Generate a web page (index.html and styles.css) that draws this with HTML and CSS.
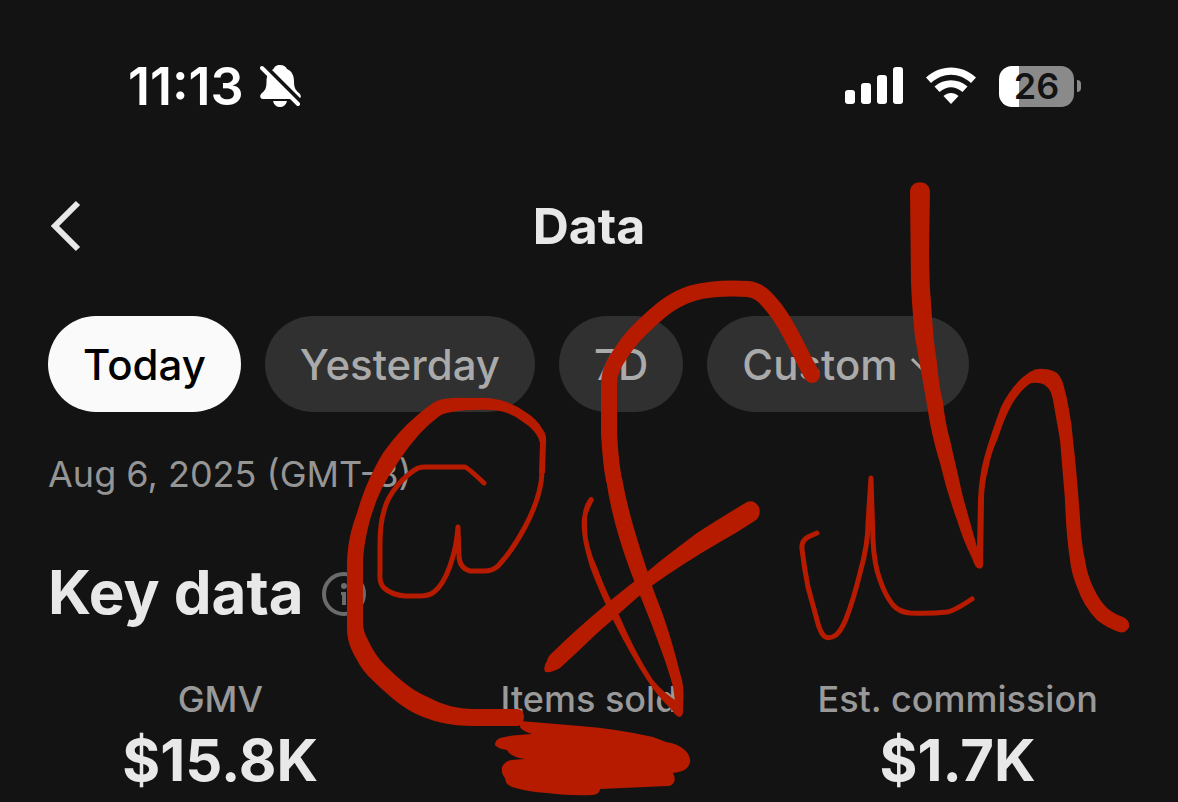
FILE: index.html
```html
<!DOCTYPE html>
<html lang="en">

<head>
    <meta charset="UTF-8">
    <meta name="viewport" content="width=device-width, initial-scale=1.0">
    <title>Data</title>
    <link rel="stylesheet" href="styles.css">
</head>

<body>
    <div class="screen">
        <!-- Status bar -->
        <div class="status-bar">
            <div class="status-left">
                <span class="time">11:13</span>
                <svg class="bell" width="42" height="44" viewBox="0 0 42 44" aria-hidden="true">
                    <path d="M20 1c-4 0-5.500 2-6.500 4C9 7 6.500 12 6.500 17c0 7-1 9-4.500 12-3 2.500-2 6 1 6h35c3 0 4-3.500 1-6-3.500-3-5-5-5-12 0-5-2-10-7-12C26 3 24 1 20 1zM13 37h14c-1 4-3.500 6-7 6s-6-2-7-6z" fill="#fff" />
                    <path d="M3.500 2.500L41 40" stroke="#131313" stroke-width="7" />
                    <path d="M2 4L38 40" stroke="#fff" stroke-width="4" stroke-linecap="round" />
                </svg>
            </div>
            <div class="status-right">
                <svg width="58" height="38" viewBox="0 0 58 38" fill="#fff" aria-hidden="true">
                    <rect x="0" y="23" width="10" height="14" rx="3" />
                    <rect x="16" y="16" width="10" height="21" rx="3" />
                    <rect x="32" y="8" width="10" height="29" rx="3" />
                    <rect x="48" y="0" width="10" height="37" rx="3" />
                </svg>
                <svg width="52" height="38" viewBox="0 0 52 38" aria-hidden="true">
                    <path d="M1 10.500C15-3 37-3 51 10.500L46 16C34 5 18 5 6 16z" fill="#fff" />
                    <path d="M9.500 19.500C19 11 33 11 42.500 19.500L37.500 25C30 18.500 22 18.500 14.500 25z" fill="#fff" />
                    <path d="M18.500 29C23 25 29 25 33.500 29L26 37z" fill="#fff" />
                </svg>
                <div class="battery">
                    <span class="battery-level">26</span>
                    <span class="battery-tip"></span>
                </div>
            </div>
        </div>

        <!-- Header -->
        <div class="header">
            <button class="back" type="button" aria-label="Back">
                <svg width="34" height="54" viewBox="0 0 34 54" aria-hidden="true">
                    <path d="M30 4L7 27l23 23" fill="none" stroke="#e8e8e8" stroke-width="6" />
                </svg>
            </button>
            <h1>Data</h1>
        </div>

        <!-- Date filters -->
        <div class="filters">
            <button class="chip active" type="button">Today</button>
            <button class="chip" type="button">Yesterday</button>
            <button class="chip" type="button">7D</button>
            <label class="chip">
                <select aria-label="Custom range">
                    <option>Custom</option>
                </select>
                <svg width="24" height="16" viewBox="0 0 24 16" aria-hidden="true">
                    <path d="M2 3l10 10L22 3" fill="none" stroke="#aaa" stroke-width="3" />
                </svg>
            </label>
        </div>

        <p class="date">Aug 6, 2025 (GMT-8)</p>

        <div class="section-title">
            <h2>Key data</h2>
            <svg width="44" height="48" viewBox="0 0 44 48" aria-hidden="true">
                <circle cx="22" cy="26" r="20" fill="none" stroke="#6b6b6b" stroke-width="4" />
                <circle cx="22" cy="18" r="3" fill="#6b6b6b" />
                <path d="M19 24h5v13h-4V27h-1z" fill="#6b6b6b" />
            </svg>
        </div>

        <!-- Key numbers -->
        <div class="metrics">
            <div class="metric">
                <div class="metric-label">GMV</div>
                <div class="metric-value">$15.8K</div>
            </div>
            <div class="metric">
                <div class="metric-label">Items sold</div>
            </div>
            <div class="metric">
                <div class="metric-label">Est. commission</div>
                <div class="metric-value">$1.7K</div>
            </div>
        </div>

        <!-- Handwriting over the page -->
        <svg class="ink" viewBox="0 0 1178 802" aria-hidden="true">
            <!-- at sign -->
            <path class="fill" d="M518 726H473C455 726 438 723 423 717C408 711 396 702 383 690C371 679 363 672 357 660C350 648 347 640 347 627V567C347 545 351 529 357 513C363 492 371 473 383 453C398 432 412 418 433 403Q438 400 443 399Q458 397 473 398Q488 397 500 400Q515 404 527 413Q537 419 543 430Q547 435 546 443L545 473H539L540 443Q539 438 536 434Q531 427 523 422Q512 413 500 411Q487 409 473 410Q459 410 447 413Q441 414 437 418C420 431 407 448 393 470C382 485 375 503 370 520C366 535 363 550 363 567V620C363 630 365 634 368 640C374 653 381 662 390 670C402 682 415 692 430 698C443 705 458 709 473 709H517Q523 709 524 716Q524 725 518 726Z" />
            <path class="thin" d="M542 472C541 508 513 550 498 566Q493 571 484 571H470Q459 568 459 555L458 527C456 555 446 583 434 592Q429 596 420 596H405Q392 595 384 588Q379 583 380 572V545C380 528 381 520 384 511C388 493 405 475 418 468Q421 467 426 467H465Q468 468 484 483" />
            <!-- f -->
            <path class="thick" d="M812 375C804 361 799 349 790 333Q780 314 770 303Q760 290 748 289C729 288 712 288 693 293C674 299 663 308 650 320Q632 336 623 350C614 363 609 371 609 385V433C610 452 611 465 614 480" />
            <path class="fill" d="M606 478C611 515 622 550 635 583C645 608 652 624 660 647Q669 671 673 687L675 700Q663 692 653 680C640 660 630 640 620 617Q607 595 597 567Q588 548 587 530V517Q588 511 594 500Q593 495 589 498Q584 505 583 513Q581 520 582 530C583 544 587 556 590 567C597 586 605 603 613 620Q630 654 647 680Q658 697 672 710Q676 717 680 717Q684 715 683 708C684 694 684 685 680 673C676 656 672 643 667 627C660 605 653 591 647 570C636 536 628 511 622 478Z" />
            <path class="fill" d="M747 502Q754 499 759 507Q762 517 753 522C742 529 731 536 720 542C694 557 671 572 650 587C636 598 623 610 610 622C593 636 575 655 560 668Q552 673 545 672Q543 666 547 661Q548 656 552 653C568 637 585 622 603 607C618 594 632 583 647 572C662 559 680 546 697 533Q720 518 747 502Z" />
            <!-- u -->
            <path class="thin" d="M817 533L808 537Q801 541 802 549Q804 567 808 587L817 620Q820 632 824 636Q829 640 836 635Q841 631 846 619Q854 598 860 573Q868 545 868 523L871 478L873 540Q874 564 880 580Q885 595 893 605Q899 612 910 613Q930 614 947 612Q954 611 972 599" />
            <!-- h -->
            <path class="fill" d="M910 192C910 179 930 179 930 192L929 253Q929 285 932 317Q933 340 937 363Q939 387 943 402Q945 422 950 440L963 497L977 547L978 500Q979 477 984 458C989 440 995 423 1001 407C1008 393 1018 379 1030 372Q1036 368 1043 369Q1051 369 1057 373Q1062 378 1064 387Q1067 397 1069 410Q1072 425 1073 440Q1076 466 1077 480L1080 517Q1081 542 1085 560Q1087 574 1093 587Q1099 600 1107 608Q1114 614 1123 617Q1130 620 1129 627Q1126 634 1119 632Q1107 628 1097 620Q1084 607 1077 587Q1071 572 1070 560Q1066 534 1065 500L1060 440L1053 400Q1051 390 1047 387Q1043 383 1038 383Q1031 382 1028 385C1013 397 1005 417 998 438Q991 453 988 470Q984 485 984 500L983 566Q981 571 976 567Q974 564 972 558Q963 540 957 520Q947 493 940 463Q931 434 927 405L915 337Q912 308 911 283Z" />
            <!-- scribble -->
            <path class="fill" d="M520 721L580 726Q618 729 653 737L666 742Q673 743 677 745Q686 749 689 756Q692 763 687 768Q683 772 673 773Q676 779 674 782Q672 786 668 786L600 789Q600 794 593 795Q569 796 547 793Q528 792 512 787Q505 784 505 778Q501 774 502 767Q504 762 511 760L525 759Q510 757 507 750Q498 749 495 745Q495 740 500 738Q510 735 532 734Q522 731 520 727Z" />
        </svg>
    </div>
</body>

</html>
```
FILE: styles.css
```css
* {
    box-sizing: border-box;
}

body {
    margin: 0;
    background-color: #131313;
    color: #e8e8e8;
    font-family: Inter, "Liberation Sans", sans-serif;
}

h1,
h2,
p {
    margin: 0;
}

.screen {
    position: relative;
    padding: 56px 0 16px;
}

/* Status bar */
.status-bar {
    display: flex;
    justify-content: space-between;
    align-items: center;
    height: 60px;
    padding: 0 98px 0 128px;
    color: #fff;
}

.status-left {
    display: flex;
    align-items: center;
    gap: 16px;
}

.status-right {
    display: flex;
    align-items: center;
    gap: 22px;
}

.time {
    font-size: 52px;
    font-weight: 600;
}

.battery {
    position: relative;
    display: flex;
    justify-content: center;
    align-items: center;
    width: 75px;
    height: 41px;
    border-radius: 13px;
    background: linear-gradient(to right, #fff 20px, #8a8a8a 20px);
    margin-right: 6px;
}

.battery-level {
    color: #131313;
    font-size: 36px;
    font-weight: 600;
}

.battery-tip {
    position: absolute;
    right: -7px;
    width: 4px;
    height: 12px;
    border-radius: 0 4px 4px 0;
    background-color: #8a8a8a;
}

/* Header */
.header {
    display: grid;
    grid-template-columns: 1fr auto 1fr;
    align-items: center;
    height: 100px;
    margin-top: 60px;
    padding: 0 48px;
}

.back {
    display: flex;
    justify-self: start;
    padding: 0;
    border: none;
    background: none;
    cursor: pointer;
}

h1 {
    font-size: 50px;
    font-weight: 700;
}

/* Filters */
.filters {
    display: flex;
    gap: 24px;
    margin-top: 40px;
    padding: 0 48px;
}

.chip {
    display: flex;
    align-items: center;
    gap: 12px;
    height: 96px;
    padding: 0 35px;
    border: none;
    border-radius: 48px;
    background-color: #303030;
    color: #aaa;
    font-family: inherit;
    font-size: 42px;
    font-weight: 500;
    cursor: pointer;
}

.chip.active {
    background-color: #fafafa;
    color: #000;
}

.chip select {
    appearance: none;
    padding: 0;
    border: none;
    background: none;
    color: inherit;
    font: inherit;
}

.date {
    margin-top: 40px;
    padding: 0 48px;
    color: #959595;
    font-size: 36px;
    line-height: 44px;
}

.section-title {
    display: flex;
    align-items: center;
    gap: 18px;
    margin-top: 60px;
    padding: 0 48px;
}

h2 {
    font-size: 60px;
    font-weight: 700;
    line-height: 72px;
}

/* Key numbers */
.metrics {
    display: grid;
    grid-template-columns: repeat(3, 1fr);
    margin-top: 48px;
    padding: 0 36px;
    text-align: center;
}

.metric-label {
    color: #999;
    font-size: 36px;
    font-weight: 500;
    line-height: 46px;
}

.metric-value {
    margin-top: 2px;
    font-size: 58px;
    font-weight: 700;
    line-height: 72px;
}

/* Handwriting */
.ink {
    position: absolute;
    top: 0;
    left: 0;
    width: 100%;
    pointer-events: none;
}

.ink .fill {
    fill: #b61b00;
}

.ink .thin,
.ink .thick {
    fill: none;
    stroke: #b61b00;
    stroke-width: 5;
    stroke-linecap: round;
    stroke-linejoin: round;
}

.ink .thick {
    stroke-width: 16;
}
```
